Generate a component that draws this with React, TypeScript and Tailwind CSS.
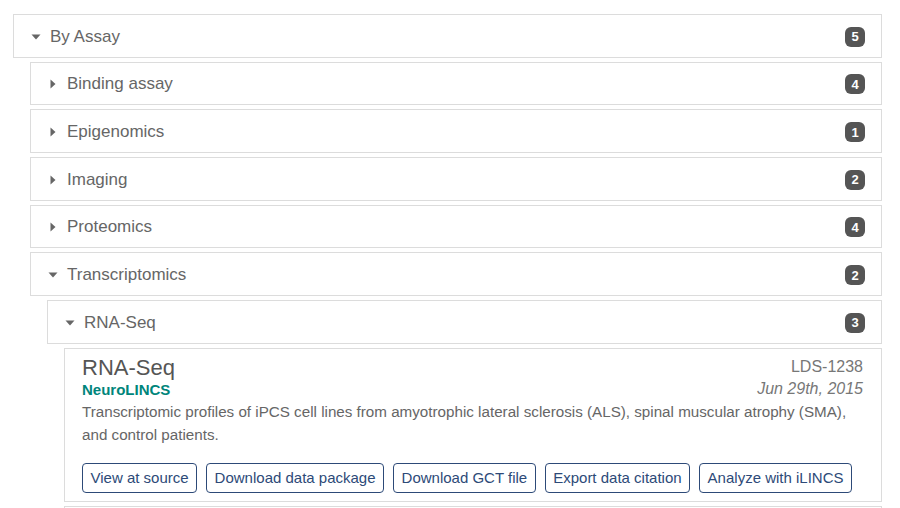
import React from "react";

function Caret({ open }: { open: boolean }) {
  return (
    <span className="flex w-[10px] items-center justify-center">
      {open ? (
        <svg width="10" height="6" viewBox="0 0 10 6">
          <path d="M0.5 0.5 L9.5 0.5 L5 5.5 Z" fill="#666" />
        </svg>
      ) : (
        <svg width="6" height="10" viewBox="0 0 6 10">
          <path d="M0.5 0.5 L5.5 5 L0.5 9.5 Z" fill="#666" />
        </svg>
      )}
    </span>
  );
}

function Row({ label, count, open }: { label: string; count: number; open: boolean }) {
  return (
    <div className="mb-[4px] flex h-[43.67px] items-center border border-[#dcdcdc] bg-white pl-[17px] pr-[16px] pt-[2px]">
      <Caret open={open} />
      <span className="ml-[9px] flex-1 text-[17px] leading-[20px] text-[#666]">{label}</span>
      <span className="flex h-[20px] w-[20px] items-center justify-center rounded-[6px] bg-[#555] text-[13px] font-bold leading-none text-white">
        {count}
      </span>
    </div>
  );
}

const buttons = [
  "View at source",
  "Download data package",
  "Download GCT file",
  "Export data citation",
  "Analyze with iLINCS",
];

export default function App() {
  return (
    <div
      className="h-[508px] w-[900px] overflow-hidden bg-white pl-[13px] pr-[18px] pt-[14px]"
      style={{ fontFamily: '"Liberation Sans", Arial, sans-serif' }}
    >
      <Row label="By Assay" count={5} open />
      <div className="ml-[17px]">
        <Row label="Binding assay" count={4} open={false} />
        <Row label="Epigenomics" count={1} open={false} />
        <Row label="Imaging" count={2} open={false} />
        <Row label="Proteomics" count={4} open={false} />
        <Row label="Transcriptomics" count={2} open />
        <div className="ml-[17px]">
          <Row label="RNA-Seq" count={3} open />
          <div className="ml-[17px]">
            <div className="mb-[4px] border border-[#dcdcdc] bg-white pb-[8px] pl-[17px] pr-[18px] pt-[6px]">
              <div className="flex justify-between">
                <div className="flex flex-col">
                  <span className="text-[22px] leading-[25px] text-[#555]">RNA-Seq</span>
                  <span className="text-[15px] font-bold leading-[20px] text-[#00857b]">NeuroLINCS</span>
                </div>
                <div className="flex flex-col items-end pt-[1px]">
                  <span className="text-[16px] leading-[22px] text-[#777]">LDS-1238</span>
                  <span className="text-[16px] italic leading-[22px] text-[#777]">Jun 29th, 2015</span>
                </div>
              </div>
              <p className="text-[15.2px] leading-[23px] text-[#666]">
                Transcriptomic profiles of iPCS cell lines from amyotrophic lateral sclerosis (ALS), spinal
                muscular atrophy (SMA), and control patients.
              </p>
              <div className="mt-[17px] flex gap-[9px]">
                {buttons.map((b) => (
                  <button
                    key={b}
                    className="h-[30px] rounded-[4px] border border-[#2d4a78] bg-white px-[7.5px] text-[15px] leading-[20px] text-[#2d4a78]"
                  >
                    {b}
                  </button>
                ))}
              </div>
            </div>
            <div className="h-[40px] border border-[#dcdcdc] bg-white" />
          </div>
        </div>
      </div>
    </div>
  );
}
